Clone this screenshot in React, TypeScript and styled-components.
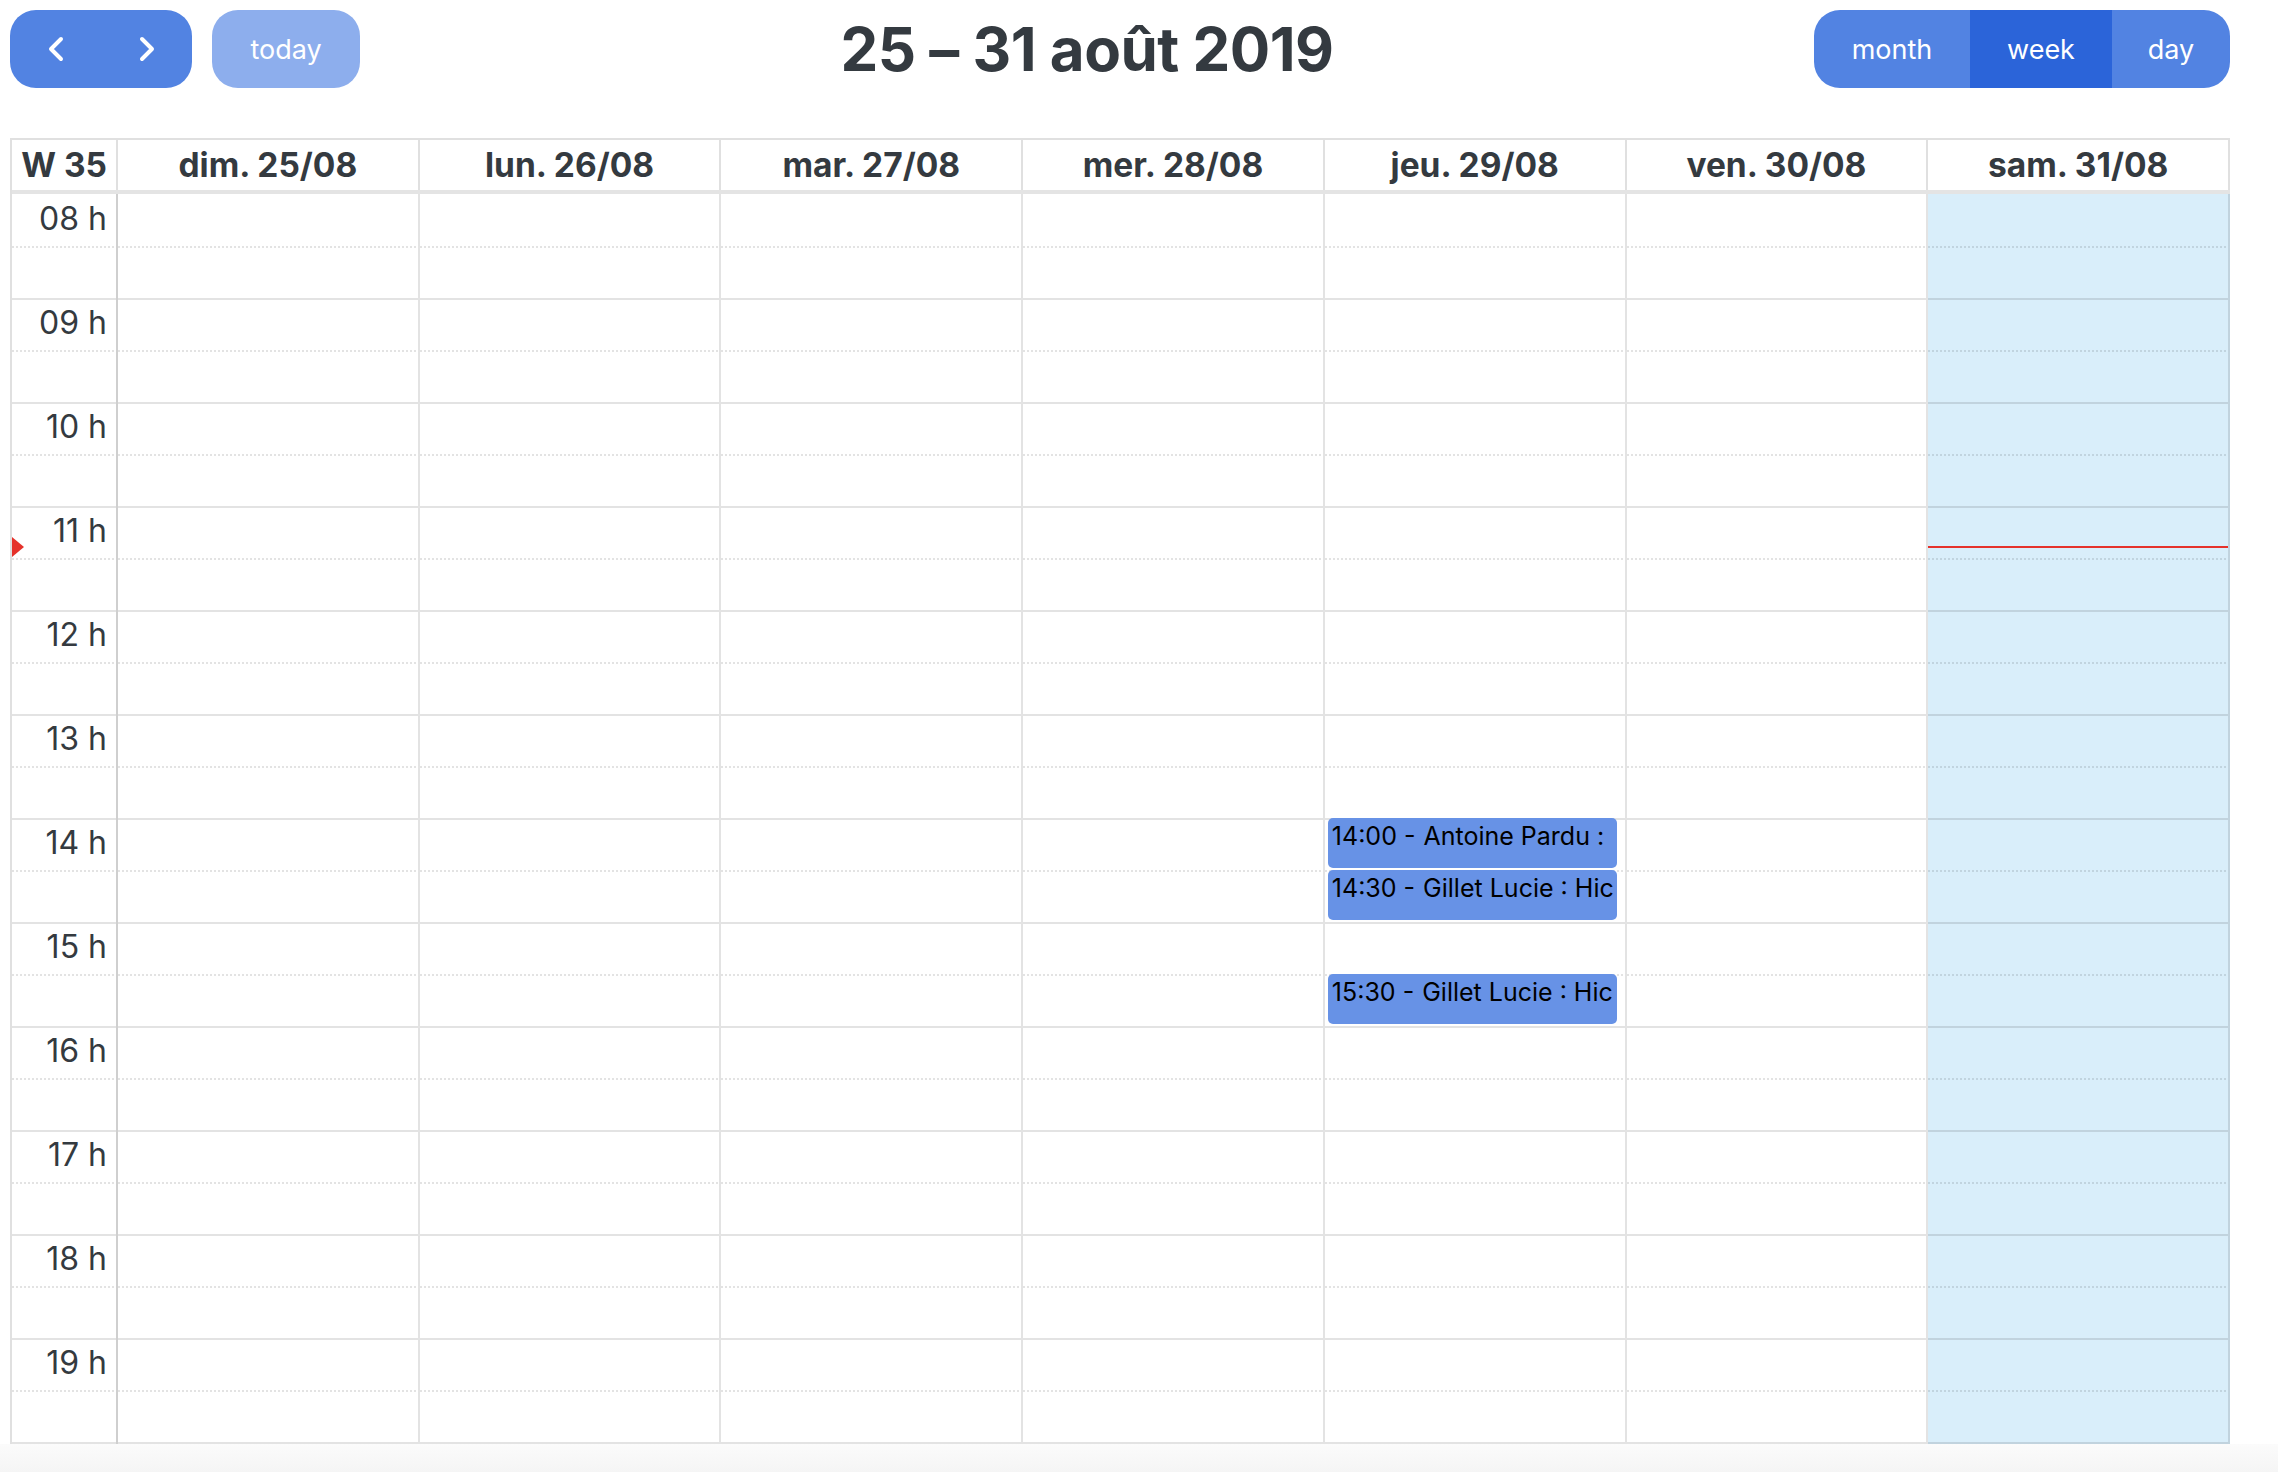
import styled, { createGlobalStyle } from 'styled-components';
import { ChevronLeft, ChevronRight } from 'lucide-react';

const GlobalStyle = createGlobalStyle`
  html, body {
    margin: 0;
    padding: 0;
    background: #fff;
  }
  body {
    font-family: Inter, "Noto Sans", "Liberation Sans", sans-serif;
    color: #343a40;
  }
`;

const SLOT = 52;
const HOUR = SLOT * 2;
const START_HOUR = 8;
const HOURS = 12;
const LINE = 'rgba(0, 0, 0, 0.11)';

const days = ['dim. 25/08', 'lun. 26/08', 'mar. 27/08', 'mer. 28/08', 'jeu. 29/08', 'ven. 30/08', 'sam. 31/08'];
const TODAY = 6;

const events = [
  { day: 4, start: '14:00', title: 'Antoine Pardu :' },
  { day: 4, start: '14:30', title: 'Gillet Lucie : Hic' },
  { day: 4, start: '15:30', title: 'Gillet Lucie : Hic' },
];

const NOW = '11:23';

const toOffset = (time: string) => {
  const [h, m] = time.split(':').map(Number);
  return (h - START_HOUR) * HOUR + (m / 60) * HOUR;
};

const Page = styled.div`
  display: flex;
  flex-direction: column;
  min-height: 100vh;
`;

const Main = styled.div`
  width: 2220px;
  padding: 10px 0 0 10px;
`;

const Toolbar = styled.div`
  display: flex;
  justify-content: space-between;
  align-items: center;
  height: 78px;
`;

const Chunk = styled.div`
  display: flex;
  align-items: center;
  gap: 20px;
`;

const ButtonGroup = styled.div`
  display: flex;
  height: 78px;
  border-radius: 26px;
  overflow: hidden;
`;

const Button = styled.button<{ $width: number; $active?: boolean; $muted?: boolean; $round?: boolean }>`
  display: flex;
  align-items: center;
  justify-content: center;
  width: ${({ $width }) => $width}px;
  height: 78px;
  padding: 0;
  border: none;
  border-radius: ${({ $round }) => ($round ? '26px' : '0')};
  background: ${({ $active, $muted }) => ($active ? '#2b64d9' : $muted ? '#8daeed' : '#5283e2')};
  color: #fff;
  font-family: Inter, "Noto Sans", sans-serif;
  font-size: 27px;
  font-weight: 400;
  cursor: pointer;
`;

const Title = styled.h2`
  margin: 0;
  font-size: 60px;
  font-weight: 700;
  letter-spacing: -0.5px;
  color: #343a40;
`;

const Calendar = styled.div`
  margin-top: 50px;
  border-left: 2px solid #e0e0e0;
  border-top: 2px solid #e0e0e0;
`;

const HeaderRow = styled.div`
  display: grid;
  grid-template-columns: 106px repeat(7, 1fr);
  height: 50px;
`;

const HeadCell = styled.div<{ $axis?: boolean }>`
  border-right: 2px solid #e0e0e0;
  font-size: 33.5px;
  font-weight: 700;
  line-height: 50px;
  text-align: ${({ $axis }) => ($axis ? 'right' : 'center')};
  padding-right: ${({ $axis }) => ($axis ? '9px' : '0')};
  white-space: nowrap;
`;

const Divider = styled.div`
  height: 4px;
  background: #e4e4e4;
`;

const Body = styled.div`
  display: grid;
  grid-template-columns: 106px repeat(7, 1fr);
`;

const Column = styled.div<{ $axis?: boolean; $today?: boolean }>`
  position: relative;
  padding-top: 2px;
  border-right: 2px solid ${({ $axis }) => ($axis ? '#cfcfcf' : LINE)};
  background: ${({ $today }) => ($today ? '#d9eefa' : 'transparent')};
`;

const Slot = styled.div<{ $half?: boolean }>`
  height: ${SLOT}px;
  box-sizing: border-box;
  border-bottom: ${({ $half }) => ($half ? 'none' : `2px solid ${LINE}`)};
  background-image: ${({ $half }) =>
    $half ? `linear-gradient(to right, ${LINE} 50%, transparent 50%)` : 'none'};
  background-size: 4px 2px;
  background-repeat: repeat-x;
  background-position: left bottom;
`;

const TimeLabel = styled.div`
  padding: 4px 9px 0 0;
  font-size: 32px;
  line-height: 38px;
  text-align: right;
  color: #343a40;
`;

const Event = styled.div`
  position: absolute;
  left: 3px;
  right: 8px;
  height: ${SLOT - 2}px;
  box-sizing: border-box;
  padding: 3px 4px;
  border-radius: 5px;
  background: #6792e6;
  color: #000;
  font-size: 25px;
  line-height: 30px;
  white-space: nowrap;
  overflow: hidden;
`;

const EventTime = styled.span`
  margin-right: 8px;
`;

const NowLine = styled.div`
  position: absolute;
  left: 0;
  right: 0;
  height: 2px;
  background: #e5322b;
`;

const NowArrow = styled.div`
  position: absolute;
  left: 0;
  width: 0;
  height: 0;
  border-top: 10px solid transparent;
  border-bottom: 10px solid transparent;
  border-left: 12px solid #e5322b;
`;

const Footer = styled.div`
  flex: 1;
  min-height: 28px;
  background: linear-gradient(#fbfbfb, #f5f5f5);
`;

const slots = Array.from({ length: HOURS * 2 }, (_, i) => i);
const pad = (n: number) => (n < 10 ? `0${n}` : `${n}`);

export default function App() {
  const nowTop = Math.round(toOffset(NOW));
  return (
    <Page>
      <GlobalStyle />
      <Main>
        <Toolbar>
          <Chunk>
            <ButtonGroup>
              <Button $width={91}>
                <ChevronLeft size={40} strokeWidth={2.4} />
              </Button>
              <Button $width={91}>
                <ChevronRight size={40} strokeWidth={2.4} />
              </Button>
            </ButtonGroup>
            <Button $width={148} $muted $round disabled>
              today
            </Button>
          </Chunk>
          <Title>25 – 31 août 2019</Title>
          <ButtonGroup>
            <Button $width={156}>month</Button>
            <Button $width={142} $active>
              week
            </Button>
            <Button $width={118}>day</Button>
          </ButtonGroup>
        </Toolbar>

        <Calendar>
          <HeaderRow>
            <HeadCell $axis>W 35</HeadCell>
            {days.map((d) => (
              <HeadCell key={d}>{d}</HeadCell>
            ))}
          </HeaderRow>
          <Divider />
          <Body>
            <Column $axis>
              {slots.map((i) => (
                <Slot key={i} $half={i % 2 === 0}>
                  {i % 2 === 0 && <TimeLabel>{pad(START_HOUR + i / 2)} h</TimeLabel>}
                </Slot>
              ))}
              <NowArrow style={{ top: nowTop - 9 }} />
            </Column>
            {days.map((d, di) => (
              <Column key={d} $today={di === TODAY}>
                {slots.map((i) => (
                  <Slot key={i} $half={i % 2 === 0} />
                ))}
                {events
                  .filter((e) => e.day === di)
                  .map((e) => (
                    <Event key={e.start} style={{ top: toOffset(e.start) }}>
                      <EventTime>{e.start} -</EventTime>
                      {e.title}
                    </Event>
                  ))}
                {di === TODAY && <NowLine style={{ top: nowTop }} />}
              </Column>
            ))}
          </Body>
        </Calendar>
      </Main>
      <Footer />
    </Page>
  );
}
